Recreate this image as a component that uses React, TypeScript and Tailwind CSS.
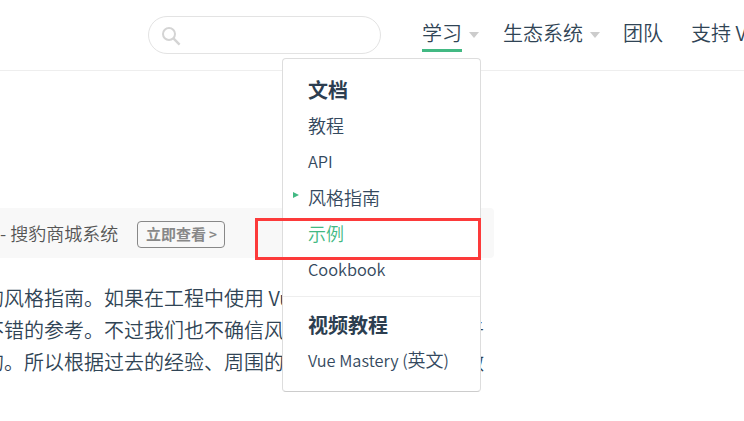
import type { ReactNode } from "react";

function Caret() {
  return (
    <span className="ml-[7px] h-0 w-0 border-x-[5px] border-t-[6px] border-x-transparent border-t-[#ccc]" />
  );
}

function MenuItem({ children, active = false, current = false }: { children: ReactNode; active?: boolean; current?: boolean }) {
  return (
    <li className={`relative flex h-9 items-center pl-[25px] text-[18px] leading-9 ${active ? "text-[#42b983]" : "text-[#34495e]"}`}>
      {current && (
        <span className="absolute left-[10px] top-[13px] h-0 w-0 border-y-[3px] border-l-[6px] border-y-transparent border-l-[#42b983]" />
      )}
      <span>{children}</span>
    </li>
  );
}

function Dropdown() {
  return (
    <div className="absolute left-[282px] top-[58px] h-[334px] w-[199px] rounded-[4px] border border-[#ddd] border-b-[#ccc] bg-white pt-[13px]">
      <h4 className="h-[35px] pl-[25px] text-[20px] font-bold leading-[35px] text-[#2c3e50]">文档</h4>
      <ul>
        <MenuItem>教程</MenuItem>
        <MenuItem><span className="block text-[16.35px]">API</span></MenuItem>
        <MenuItem current>风格指南</MenuItem>
        <MenuItem active>示例</MenuItem>
        <MenuItem><span className="block text-[16.35px]">Cookbook</span></MenuItem>
      </ul>
      <div className="mt-[9px] border-t border-[#eee] pt-[10px]">
        <h4 className="h-[35px] pl-[25px] text-[20px] font-bold leading-[35px] text-[#2c3e50]">视频教程</h4>
        <ul className="-mt-px">
          <MenuItem><span className="text-[16.35px]">Vue Mastery (</span>英文<span className="text-[16.35px]">)</span></MenuItem>
        </ul>
      </div>
    </div>
  );
}

export default function App() {
  return (
    <div className="relative h-[421px] w-[744px] overflow-hidden bg-white font-['Noto_Sans_CJK_SC',sans-serif] text-[20px] font-[350] text-[#304455]">
      <header className="flex h-[71px] items-start border-b border-[#eee] pl-[148px]">
        <div className="mt-4 h-[38px] w-[233px] shrink-0 rounded-full border border-[#e3e3e3] pl-[13px] pt-[10px]">
          <svg width="19" height="19" viewBox="0 0 19 19" fill="none" stroke="#d4d4d4">
            <circle cx="7" cy="7" r="6" strokeWidth="2" />
            <path d="M11.2 11.2 17.6 17.6" strokeWidth="2.4" />
          </svg>
        </div>
        <nav className="ml-[41px] flex shrink-0 items-start whitespace-nowrap leading-[32px]">
          <div className="mt-[17px] flex h-[35px] items-center">
            <span className="h-[35px] border-b-[3px] border-[#42b983]">学习</span>
            <Caret />
          </div>
          <div className="ml-6 mt-[17px] flex h-[35px] items-center">
            <span className="h-[35px]">生态系统</span>
            <Caret />
          </div>
          <span className="ml-[23px] mt-[17px]">团队</span>
          <span className="ml-7 mt-[17px]">支持 Vue</span>
        </nav>
      </header>

      <main className="pt-[137px]">
        <div className="flex h-[50px] w-[494px] items-center rounded-r-[4px] bg-[#f8f8f8] text-[18px] text-[#555]">
          <span className="w-[136px] shrink-0 whitespace-pre">- 搜豹商城系统</span>
          <span className="ml-px mt-[3px] h-[27px] w-[88px] whitespace-nowrap rounded-[4px] border border-[#888] pl-2 text-[15px] font-bold leading-[24px] text-[#888]">
            立即查看<span className="text-[13.5px]"> &gt;</span>
          </span>
        </div>
        <div className="-ml-4 mt-6 whitespace-nowrap leading-8">
          <p>的风格指南。如果在工程中使用 Vue，为了回避错误、</p>
          <p>不错的参考。不过我们也不确信风格指南的所有内容对于</p>
          <p>的。所以根据过去的经验、周围的技术栈、个人价值观做</p>
        </div>
      </main>

      <Dropdown />
      <div className="absolute left-[255px] top-[218px] h-[42px] w-[226px] border-[3px] border-[#fc3a3a]" />
    </div>
  );
}
